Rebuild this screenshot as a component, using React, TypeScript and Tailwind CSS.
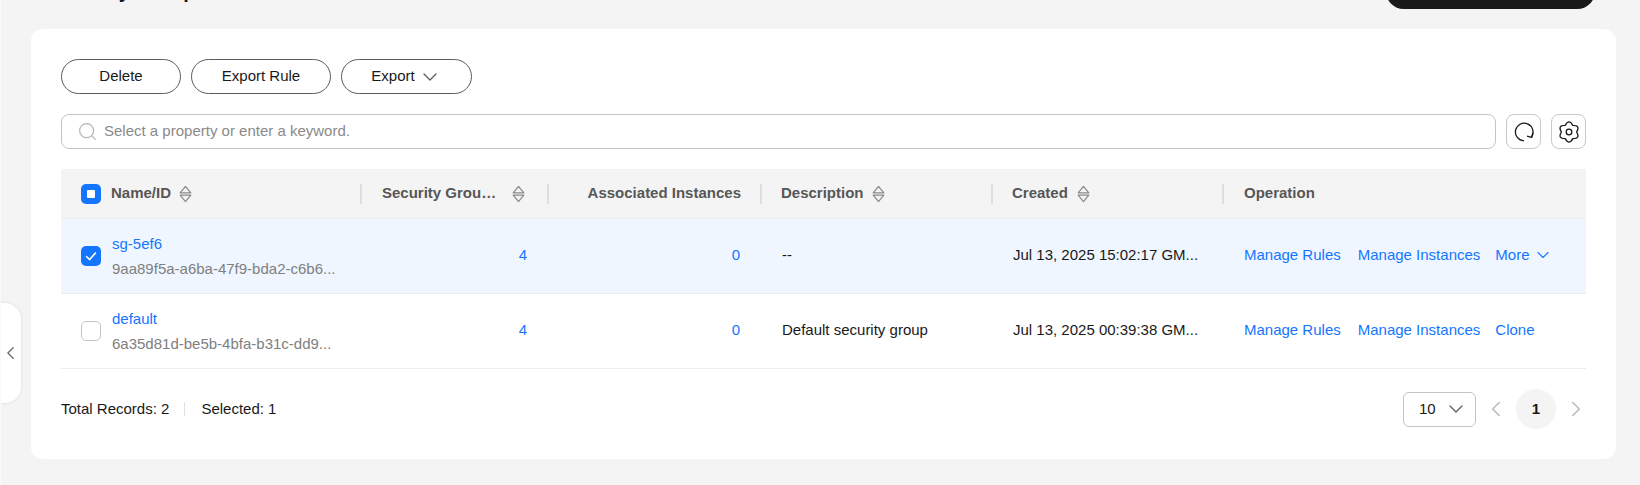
import React from "react";
import { ChevronDown, ChevronLeft, ChevronRight, Search } from "lucide-react";

const font = "font-['Liberation_Sans',Arial,sans-serif]";

// up + down outline triangles next to a sortable column title
function SortIcon() {
  return (
    <svg width="13" height="18" viewBox="0 0 13 18" fill="none" stroke="#8a8a8a" strokeWidth="1.2" strokeLinejoin="round" className="shrink-0">
      <path d="M1.2 7.8 6.5 1.4 11.8 7.8Z" />
      <path d="M1.2 10.2 6.5 16.6 11.8 10.2Z" />
    </svg>
  );
}

function Checkbox({ state }: { state: "none" | "some" | "all" }) {
  if (state === "none") {
    return <span className="h-5 w-5 shrink-0 rounded-[5px] border border-[#c4c4c4] bg-white" />;
  }
  return (
    <span className="flex h-5 w-5 shrink-0 items-center justify-center rounded-[5px] bg-[#1476ff]">
      {state === "some" ? (
        <span className="h-2 w-2 rounded-[1px] bg-white" />
      ) : (
        <svg width="14" height="14" viewBox="0 0 14 14" fill="none" stroke="#fff" strokeWidth="1.6">
          <path d="M2.2 7.2 5.6 10.6 11.8 3.6" />
        </svg>
      )}
    </span>
  );
}

function PillButton({ children, className }: { children: React.ReactNode; className: string }) {
  return (
    <button className={`flex h-[35px] items-center justify-center rounded-full border border-[#5c5c5c] bg-white text-[15px] text-[#191919] ${className}`}>
      {children}
    </button>
  );
}

function HeaderCell({ title, sort, className }: { title: string; sort?: boolean; className: string }) {
  return (
    <div className={`flex items-center ${className}`}>
      <span className="whitespace-nowrap text-[15px] font-bold text-[#575757]">{title}</span>
      {sort && <SortIcon />}
    </div>
  );
}

const Sep = () => <span className="h-5 w-[2px] shrink-0 bg-[#dfdfdf]" />;

function Row({
  selected,
  name,
  id,
  description,
  created,
  last,
}: {
  selected: boolean;
  name: string;
  id: string;
  description: string;
  created: string;
  last: React.ReactNode;
}) {
  return (
    <div className={`flex h-[75px] items-center border-b border-[#ececec] text-[15px] ${selected ? "bg-[#eff6ff]" : "bg-white"}`}>
      <div className="flex w-[300px] items-center pl-5">
        <Checkbox state={selected ? "all" : "none"} />
        <div className="ml-[11px] leading-[25px]">
          <div className="text-[#1476ff]">{name}</div>
          <div className="text-[#808080]">{id}</div>
        </div>
      </div>
      <div className="w-[187px] pb-[2px] pr-[21px] text-right text-[#1476ff]">4</div>
      <div className="w-[212px] pb-[2px] pr-[20px] text-right text-[#1476ff]">0</div>
      <div className="w-[253px] pb-[2px] pl-[22px] text-[#191919]">{description}</div>
      <div className="w-[231px] whitespace-nowrap pb-[2px] text-[#191919]">{created}</div>
      <div className="flex flex-1 items-center pb-[2px] text-[#1476ff]">
        <span>Manage Rules</span>
        <span className="ml-[17px]">Manage Instances</span>
        <span className="ml-[15px] flex items-center">{last}</span>
      </div>
    </div>
  );
}

export default function App() {
  return (
    <div className={`${font} relative h-[485px] w-[1640px] overflow-hidden border-l border-[#fafafa] bg-[#f4f4f4]`}>
      {/* clipped page title + create button */}
      <div className="flex h-[29px] items-start justify-between pl-[50px] pr-[45px]">
        <h1 className="-mt-[23px] text-[20px] font-bold leading-[28px] text-[#191919]">Security Groups</h1>
        <div className="-mt-[26px] h-[35px] w-[209px] rounded-full bg-[#191919]" />
      </div>

      {/* sidebar collapse tab */}
      <div className="absolute -left-px top-[303px] flex h-[100px] w-[21px] items-center justify-center rounded-r-2xl bg-white shadow-[0_0_3px_rgba(0,0,0,0.12)]">
        <ChevronLeft size={26} strokeWidth={1.5} className="text-[#6b6b6b]" />
      </div>

      <div className="ml-[30px] h-[430px] w-[1585px] rounded-xl bg-white px-[30px] pt-[30px]">
        {/* actions */}
        <div className="flex gap-[10px]">
          <PillButton className="w-[120px]">Delete</PillButton>
          <PillButton className="w-[140px]">Export Rule</PillButton>
          <PillButton className="w-[131px] gap-[3px]">
            Export <ChevronDown size={24} strokeWidth={1.3} className="text-[#5c5c5c]" />
          </PillButton>
        </div>

        {/* search */}
        <div className="mt-5 flex gap-[10px]">
          <div className="flex h-[35px] flex-1 items-center rounded-lg border border-[#c4c4c4] pl-[15px] text-[15px] text-[#8a8a8a]">
            <Search size={21} strokeWidth={1.3} className="text-[#b4b4b4]" />
            <span className="ml-[6px]">Select a property or enter a keyword.</span>
          </div>
          <button className="flex h-[35px] w-[35px] items-center justify-center rounded-lg border border-[#c9c9c9]">
            <svg width="22" height="22" viewBox="0 0 22 22" fill="none" stroke="#191919" strokeWidth="1.3">
              <path d="M18.6 15.8A8.8 8.8 0 1 0 11 19.8" />
              <path d="M20 11.8 18.6 16.4 14 15.2" />
            </svg>
          </button>
          <button className="flex h-[35px] w-[35px] items-center justify-center rounded-lg border border-[#c9c9c9]">
            <svg width="22" height="22" viewBox="0 0 22 22" fill="none" stroke="#191919" strokeWidth="1.3" strokeLinejoin="round">
              <path d="M18.6 11Q22.7 17.75 14.8 17.58 11 24.5 7.2 17.58-.7 17.75 3.4 11-.7 4.25 7.2 4.42 11-2.5 14.8 4.42 22.7 4.25 18.6 11Z" />
              <circle cx="11" cy="11" r="2.8" />
            </svg>
          </button>
        </div>

        {/* table */}
        <div className="mt-5">
          <div className="flex h-[50px] items-center border-b border-[#ececec] bg-[#f4f4f4]">
            <div className="flex w-[299px] items-center pl-5">
              <Checkbox state="some" />
              <HeaderCell title="Name/ID" sort className="ml-[10px] gap-2" />
            </div>
            <Sep />
            <HeaderCell title="Security Grou…" sort className="w-[185px] gap-4 pl-5" />
            <Sep />
            <HeaderCell title="Associated Instances" className="w-[211px] justify-end pr-[19px]" />
            <Sep />
            <HeaderCell title="Description" sort className="w-[229px] gap-2 pl-[19px]" />
            <Sep />
            <HeaderCell title="Created" sort className="w-[229px] gap-[9px] pl-[19px]" />
            <Sep />
            <HeaderCell title="Operation" className="pl-5" />
          </div>

          <Row
            selected
            name="sg-5ef6"
            id="9aa89f5a-a6ba-47f9-bda2-c6b6..."
            description="--"
            created="Jul 13, 2025 15:02:17 GM..."
            last={
              <>
                More <ChevronDown size={20} strokeWidth={1.3} className="ml-[3px]" />
              </>
            }
          />
          <Row
            selected={false}
            name="default"
            id="6a35d81d-be5b-4bfa-b31c-dd9..."
            description="Default security group"
            created="Jul 13, 2025 00:39:38 GM..."
            last="Clone"
          />
        </div>

        {/* footer */}
        <div className="mt-5 flex items-center justify-between">
          <div className="flex items-center text-[15px] text-[#191919]">
            <span>Total Records: 2</span>
            <span className="ml-[15px] mr-[16px] h-[14px] w-px bg-[#e3e0d8]" />
            <span>Selected: 1</span>
          </div>
          <div className="flex items-center">
            <div className="flex h-[35px] w-[73px] items-center rounded-md border border-[#c4c4c4] pl-[15px] text-[15px] text-[#191919]">
              10
              <ChevronDown size={24} strokeWidth={1.5} className="ml-2 text-[#6b6b6b]" />
            </div>
            <ChevronLeft size={26} strokeWidth={1.5} className="ml-[7px] text-[#bbbbbb]" />
            <span className="ml-[7px] flex h-10 w-10 items-center justify-center rounded-full bg-[#f4f4f4] text-[15px] font-bold text-[#191919]">1</span>
            <ChevronRight size={26} strokeWidth={1.5} className="-mr-[3px] ml-[7px] text-[#bbbbbb]" />
          </div>
        </div>
      </div>
    </div>
  );
}
